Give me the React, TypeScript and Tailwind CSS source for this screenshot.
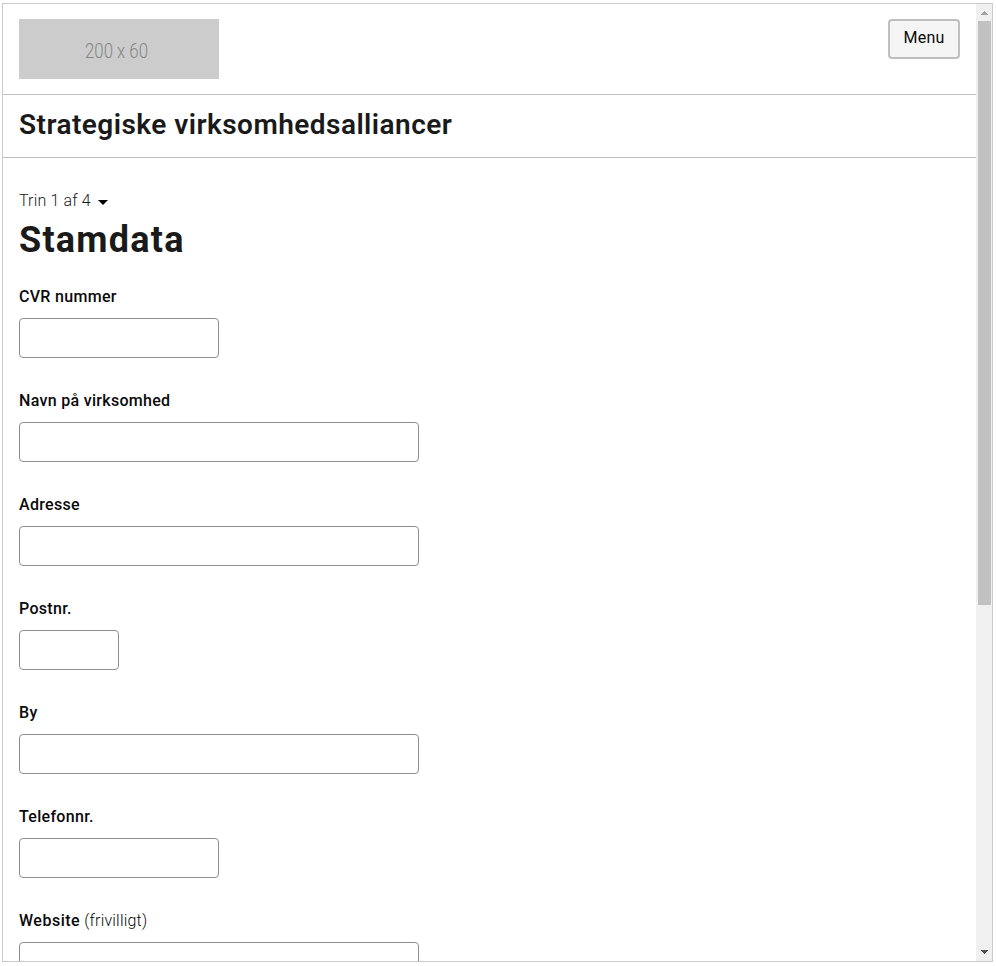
type FieldProps = {
  id: string;
  label: string;
  width: string;
  optional?: boolean;
};

const fields: FieldProps[] = [
  { id: "cvr", label: "CVR nummer", width: "w-[200px]" },
  { id: "navn", label: "Navn på virksomhed", width: "w-[400px]" },
  { id: "adresse", label: "Adresse", width: "w-[400px]" },
  { id: "postnr", label: "Postnr.", width: "w-[100px]" },
  { id: "by", label: "By", width: "w-[400px]" },
  { id: "telefon", label: "Telefonnr.", width: "w-[200px]" },
  { id: "website", label: "Website", width: "w-[400px]", optional: true },
];

function Field({ id, label, width, optional }: FieldProps) {
  return (
    <div className="mb-[31px] flex flex-col">
      <label htmlFor={id} className="mb-[9px] h-6 text-base leading-6 font-medium tracking-[0.3px] text-[#0a0a0a]">
        <span className={optional ? "tracking-[0.5px]" : ""}>{label}</span>
        {optional && <span className="font-light tracking-[0.2px]"> (frivilligt)</span>}
      </label>
      <input id={id} type="text" className={`h-10 rounded-[4px] border border-[#8e8e8e] bg-white px-2 outline-none ${width}`} />
    </div>
  );
}

function Scrollbar() {
  return (
    <div className="flex w-4 shrink-0 flex-col items-center bg-[#f0f0f0]">
      <div className="flex h-[17px] w-full items-center justify-center">
        <svg width="7" height="4" viewBox="0 0 7 4" shapeRendering="crispEdges" fill="#a3a3a3">
          <path d="M3 0h1v1h1v1h1v1h1v1H0V3h1V2h1V1h1z" />
        </svg>
      </div>
      <div className="h-[584px] w-[13px] bg-[#c1c1c1]" />
      <div className="mt-auto flex h-[17px] w-full items-center justify-center pb-[2px]">
        <svg width="7" height="4" viewBox="0 0 7 4" shapeRendering="crispEdges" fill="#505050">
          <path d="M3 4h1V3h1V2h1V1h1V0H0v1h1v1h1v1h1z" />
        </svg>
      </div>
    </div>
  );
}

export default function App() {
  return (
    <div className="h-[966px] overflow-hidden bg-white pt-[3px] pl-[2px] font-[Roboto,sans-serif] text-[#1a1a1a]">
      <div className="flex h-[959px] w-[991px] overflow-hidden border border-[#cacaca]">
        <div className="min-w-0 flex-1">
          <header className="flex h-[91px] items-start justify-between border-b border-[#bfbfbf] px-4 pt-[15px]">
            <div className="flex h-[60px] w-[200px] items-center justify-center bg-[#cccccc] pt-[3px] pr-[5px]">
              <span className="inline-block scale-x-[0.84] text-[20px] leading-6 font-light whitespace-nowrap text-[#868686]">200 x 60</span>
            </div>
            <button className="flex h-10 w-[72px] items-center justify-center rounded-[4px] border-2 border-[#bfbfbf] bg-[#f5f5f5] pb-[2px] text-base tracking-[0.25px] text-[#0a0a0a]">
              Menu
            </button>
          </header>
          <div className="flex h-[63px] items-center border-b border-[#bfbfbf] px-4 pb-[3px]">
            <div className="text-[28px] leading-9 font-semibold tracking-[0.46px]">Strategiske virksomhedsalliancer</div>
          </div>
          <main className="px-4 pt-[31px]">
            <button className="flex h-6 items-center text-base font-light tracking-[0.15px]">
              Trin 1 af 4
              <svg className="mt-[3px] ml-[7px]" width="10" height="5" viewBox="0 0 10 5" fill="#000">
                <path d="M0 0h10L5 5z" />
              </svg>
            </button>
            <h1 className="mb-6 h-12 pt-[5px] text-[36px] leading-[45px] font-bold tracking-[1.25px]">Stamdata</h1>
            <form>
              {fields.map((f) => (
                <Field key={f.id} {...f} />
              ))}
            </form>
          </main>
        </div>
        <Scrollbar />
      </div>
    </div>
  );
}
